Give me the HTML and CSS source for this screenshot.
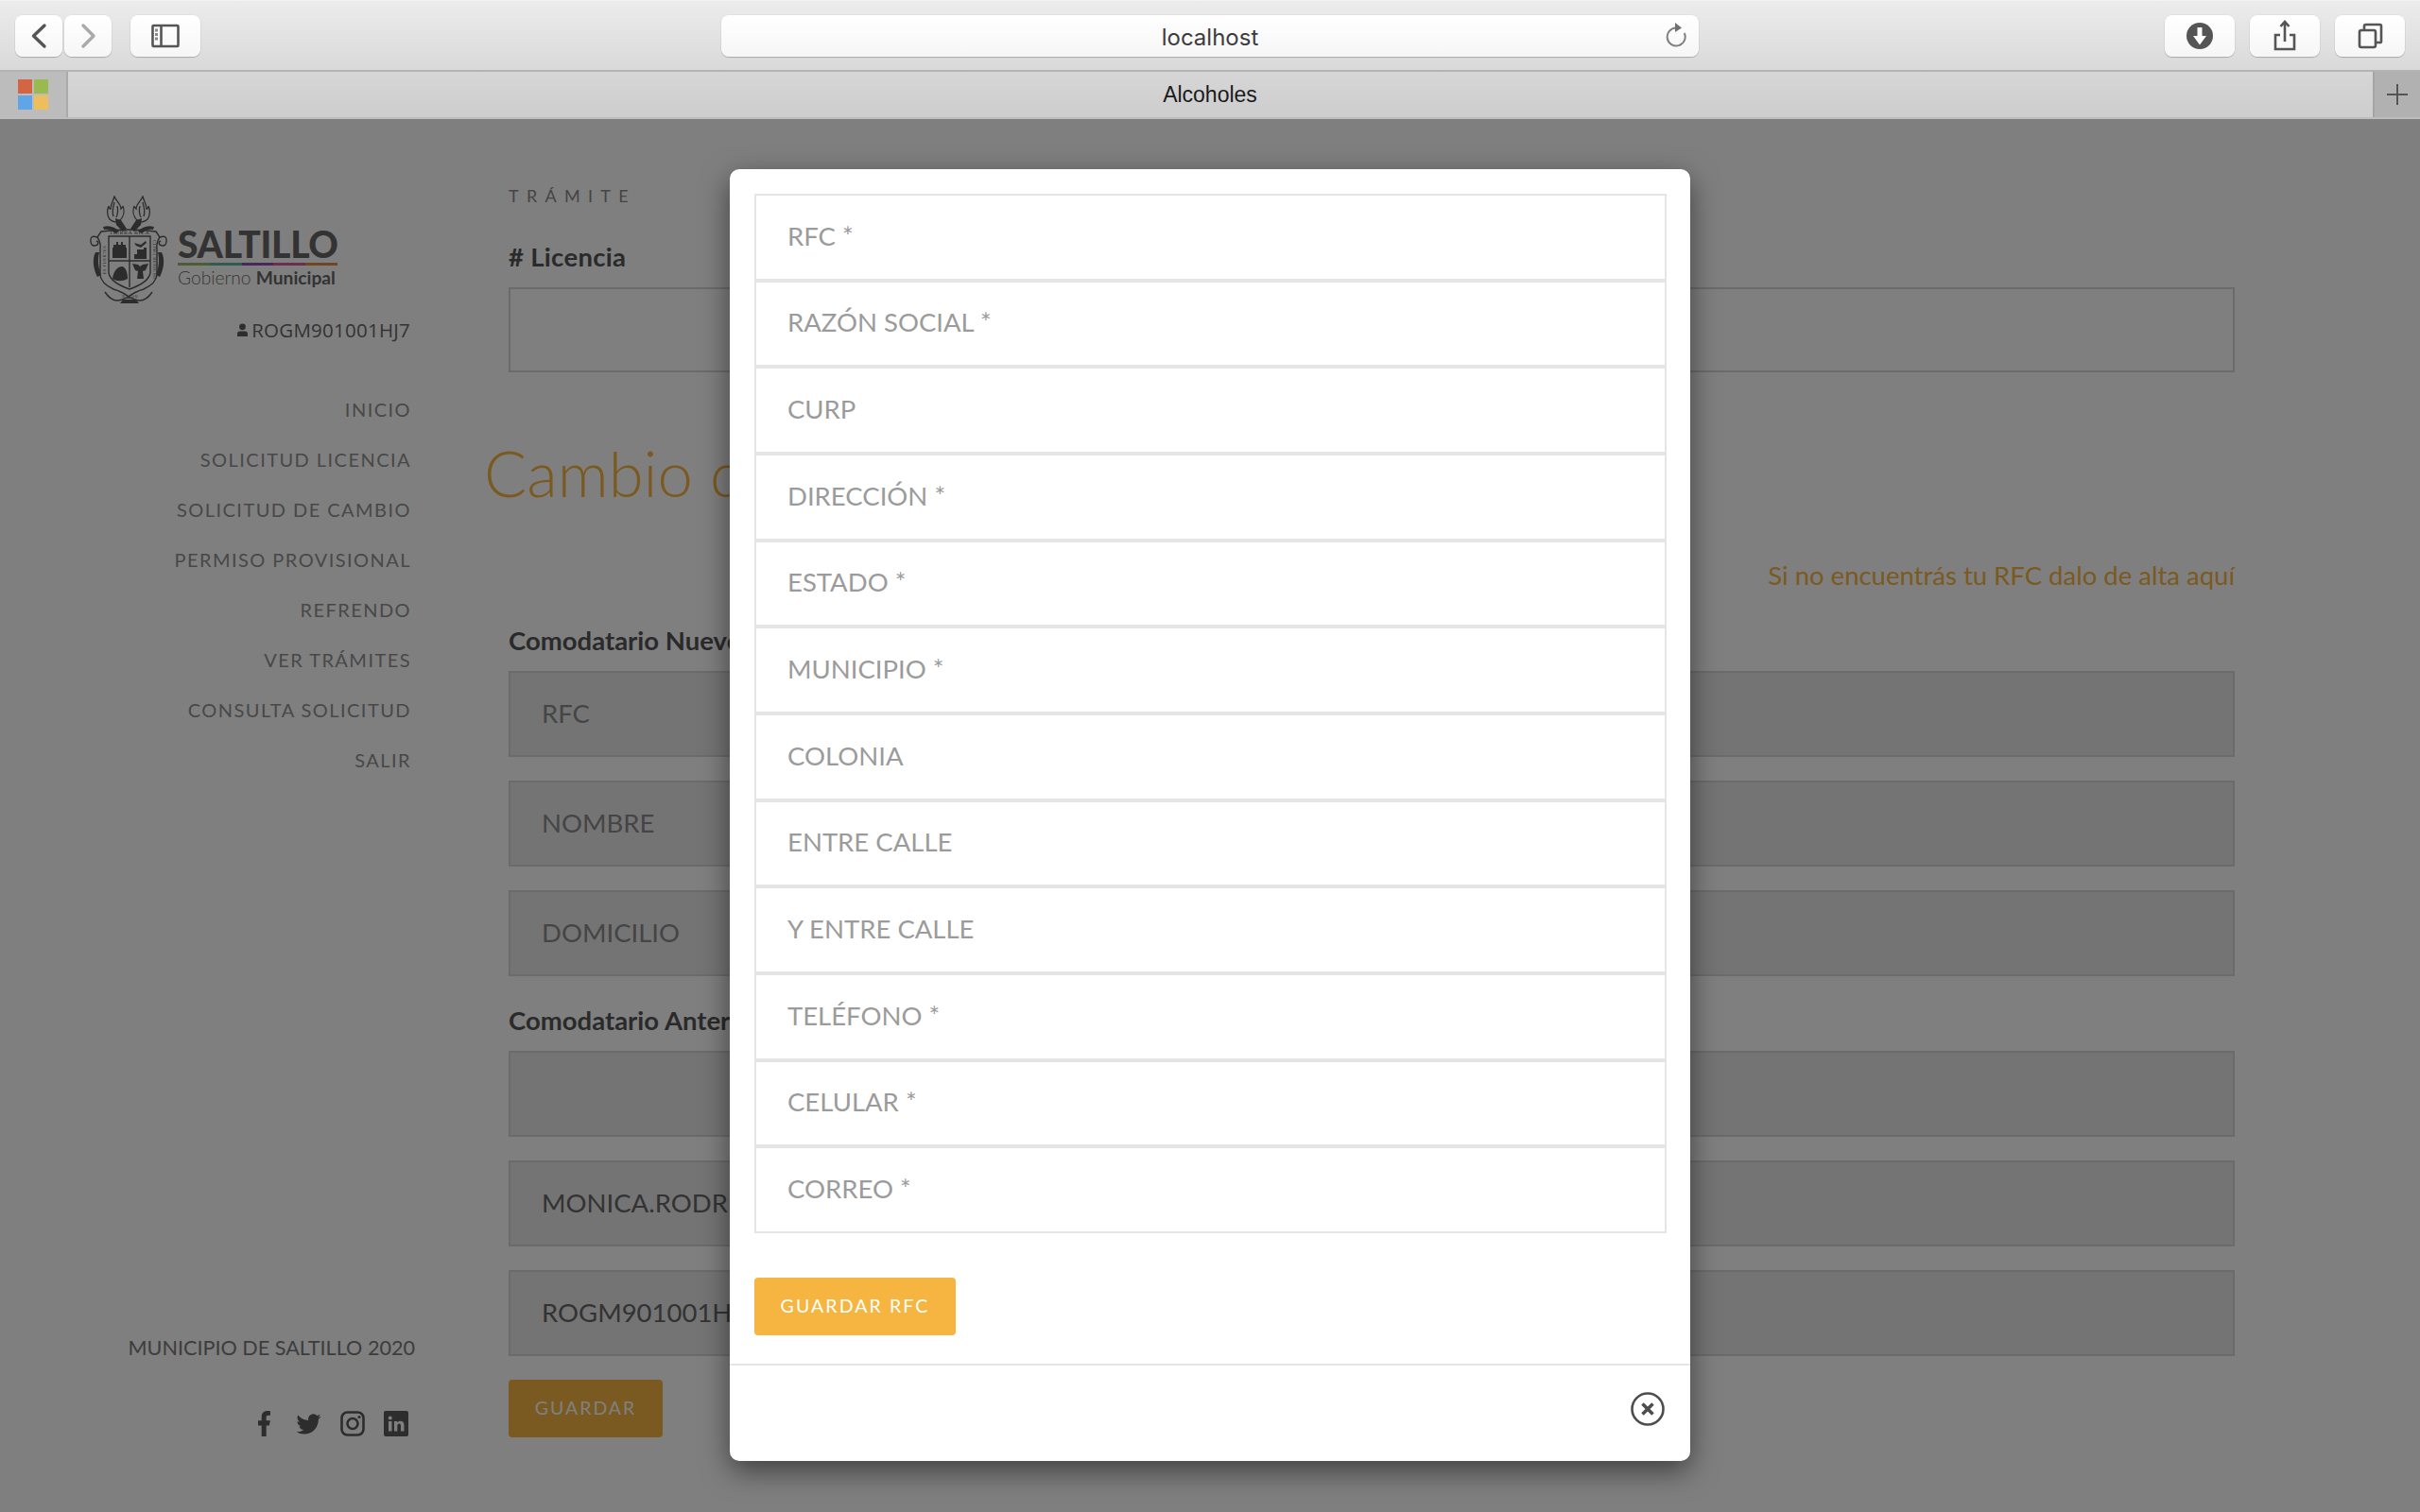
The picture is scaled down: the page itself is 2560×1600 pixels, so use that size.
FILE: index.html
```html
<!DOCTYPE html>
<html lang="es">
<head>
<meta charset="utf-8">
<title>Alcoholes</title>
<link rel="stylesheet" href="styles.css">
</head>
<body>
<div class="browser">
  <header class="toolbar">
    <div class="tb-btn nav-btn"><svg width="50" height="44" viewBox="0 0 50 44"><path d="M31 11 L19.500 22 L31 33" class="ico-s dark-s"/></svg></div>
    <div class="tb-btn nav-btn second"><svg width="50" height="44" viewBox="0 0 50 44"><path d="M20 11 L31 22 L20 33" class="ico-s light-s"/></svg></div>
    <div class="tb-btn wide sidebar-btn"><svg width="74" height="44" viewBox="0 0 74 44"><rect x="23.500" y="11" width="27" height="22" rx="1" class="ico-t"/><path d="M32.500 11V33" class="ico-t"/><path d="M26 16h3M26 20.500h3M26 25h3" class="ico-d"/></svg></div>
    <div class="url">
      <span class="url-text">localhost</span>
      <svg class="reload" width="26" height="28" viewBox="0 0 26 28"><path d="M14 6.500 A9.500 9.500 0 1 0 22.800 12" class="ico-r"/><path d="M13 1 L20 6.500 L13 11 Z" class="ico-f"/></svg>
    </div>
    <div class="tb-btn wide push"><svg width="74" height="44" viewBox="0 0 74 44"><circle cx="37" cy="22" r="14" class="ico-f2"/><path d="M34.500 13h5v9h4.500L37 31.500 30 22h4.500z" class="ico-w"/></svg></div>
    <div class="tb-btn wide gap16"><svg width="74" height="44" viewBox="0 0 74 44"><path d="M32 21 H27 V36 H47 V21 H42" class="ico-t"/><path d="M37 28V7M32.500 12 L37 7 L41.500 12" class="ico-t"/></svg></div>
    <div class="tb-btn wide gap16"><svg width="74" height="44" viewBox="0 0 74 44"><rect x="26" y="16" width="17" height="18" rx="2" class="ico-t"/><path d="M31 16V11.500Q31 10 33 10H47.500Q49 10 49 11.500V28Q49 29 47.500 29H44" class="ico-t"/></svg></div>
  </header>
  <div class="tabbar">
    <div class="fav">
      <svg width="32" height="32" viewBox="0 0 32 32"><rect width="15" height="15" class="w-r"/><rect x="17" width="15" height="15" class="w-g"/><rect y="17" width="15" height="15" class="w-b"/><rect x="17" y="17" width="15" height="15" class="w-y"/></svg>
    </div>
    <div class="tab-title">Alcoholes</div>
    <div class="plus"><svg width="22" height="22" viewBox="0 0 22 22"><path d="M11 0V22M0 11H22" class="ico-p"/></svg></div>
  </div>

  <div class="page">
    <aside class="sidebar">
      <div class="logo">
        <svg class="crest" width="82" height="115" viewBox="0 0 82 115">
          <g class="cr-line thin">
            <path d="M26 1C28 6 33 9 33 14C34 13 35 12 35 11C37 16 36 22 32 26C29 29 24 28 21 25C18 21 18 15 20 11C20 13 21 14 22 14C22 9 25 5 26 1Z"/>
            <path d="M26 7C25 12 23 16 25 22M29 11C30 15 30 19 28 23"/>
            <path d="M56 1C54 6 49 9 49 14C48 13 47 12 47 11C45 16 46 22 50 26C53 29 58 28 61 25C64 21 64 15 62 11C62 13 61 14 60 14C60 9 57 5 56 1Z"/>
            <path d="M56 7C57 12 59 16 57 22M53 11C52 15 52 19 54 23"/>
          </g>
          <g class="cr-fill">
            <path d="M27 24L33 26L39 35L35 38L28 31Z"/>
            <path d="M55 24L49 26L43 35L47 38L54 31Z"/>
            <path d="M14 33C20 31 27 33 31 38L27 40C23 36 19 35 15 36ZM68 33C62 31 55 33 51 38L55 40C59 36 63 35 67 36Z"/>
          </g>
          <g class="cr-line">
            <path d="M12 38Q41 34 70 38L74 44Q70 50 71 56V84Q70 93 57 99Q47 102 41 107Q35 102 25 99Q12 93 11 84V56Q12 50 8 44Z"/>
            <path d="M8 44Q0 41 1 49Q2 55 8 52Q10 49 7 48M74 44Q82 41 81 49Q80 55 74 52Q72 49 75 48"/>
            <path d="M20 43H64V82Q62 92 42 99Q22 92 20 82ZM42 43V97M20 69H64"/>
            <path d="M16 102Q24 114 34 110Q41 106 48 110Q58 114 66 102"/>
          </g>
          <g class="cr-fill">
            <path d="M25 52h3v-3h2v3h3v-3h2v3h3v3h1v11H24V55h1z"/>
            <path d="M47 62h3v-5h7v-2h3v12H47z"/>
            <path d="M47 50l7 2 5-4 1 2-6 5-5-2z"/>
            <path d="M24 88C25 79 30 75 34 75C37 75 40 80 40 88C34 91 29 91 24 88Z"/>
            <path d="M53 75l-2-2-6-1 3 7 3 1-1 8h7l-1-8 3-1 3-7-6 1z"/>
            <path d="M6 60C2 68 4 78 8 86L12 84C9 76 8 68 10 60ZM76 60C80 68 78 78 74 86L70 84C73 76 74 68 72 60Z"/>
            <path d="M35 110h14l3 4H32z"/>
          </g>
          <text x="42" y="41" class="cr-text">TIERRA RICA</text>
          <text class="cr-text small" transform="translate(17 68) rotate(-90)">ES FUERTES</text>
          <text class="cr-text small" transform="translate(67 68) rotate(90)">CLIMA BENIGNO</text>
          <text class="cr-text small" transform="translate(42 105) rotate(180)">NOBLE</text>
        </svg>
        <div class="wordmark">
          <div class="wm-title">SALTILLO</div>
          <div class="wm-rule"><i class="c1"></i><i class="c2"></i><i class="c3"></i><i class="c4"></i><i class="c5"></i></div>
          <div class="wm-sub">Gobierno <b>Municipal</b></div>
        </div>
      </div>
      <div class="user">
        <svg width="11" height="14" viewBox="0 0 11 14"><circle cx="5.500" cy="3.800" r="3.400" class="so"/><path d="M0 14V11.500Q0 8.500 3 8.500H8Q11 8.500 11 11.500V14Z" class="so"/></svg>
        <span>ROGM901001HJ7</span>
      </div>
      <nav class="menu">
        <a>INICIO</a>
        <a>SOLICITUD LICENCIA</a>
        <a>SOLICITUD DE CAMBIO</a>
        <a>PERMISO PROVISIONAL</a>
        <a>REFRENDO</a>
        <a>VER TRÁMITES</a>
        <a>CONSULTA SOLICITUD</a>
        <a>SALIR</a>
      </nav>
      <div class="foot">
        <div class="copy">MUNICIPIO DE SALTILLO 2020</div>
        <div class="social">
          <svg class="s-f" width="13" height="27" viewBox="7 2 10.500 20" preserveAspectRatio="none"><path d="M14 13.500h2.500l1-4H14v-2c0-1.030 0-2 2-2h1.500V2.140c-.326-.043-1.557-.14-2.857-.14C11.928 2 10 3.657 10 6.700v2.800H7v4h3V22h4z" class="so"/></svg>
          <svg width="27" height="26" viewBox="0 0 24 24"><path d="M23.953 4.570a10 10 0 01-2.825.775 4.958 4.958 0 002.163-2.723c-.951.555-2.005.959-3.127 1.184a4.920 4.920 0 00-8.384 4.482C7.690 8.095 4.067 6.130 1.640 3.162a4.822 4.822 0 00-.666 2.475c0 1.710.870 3.213 2.188 4.096a4.904 4.904 0 01-2.228-.616v.060a4.923 4.923 0 003.946 4.827 4.996 4.996 0 01-2.212.085 4.936 4.936 0 004.604 3.417 9.867 9.867 0 01-6.102 2.105c-.390 0-.779-.023-1.170-.067a13.995 13.995 0 007.557 2.209c9.053 0 13.998-7.496 13.998-13.985 0-.210 0-.420-.015-.630A9.935 9.935 0 0024 4.590z" class="so"/></svg>
          <svg width="26" height="27" viewBox="0 0 26 27"><rect x="1.500" y="1.500" width="23" height="24" rx="6" class="st"/><circle cx="13" cy="13.500" r="5.500" class="st"/><circle cx="20" cy="6.500" r="1.600" class="so"/></svg>
          <svg width="26" height="27" viewBox="0 0 26 27"><rect width="26" height="27" rx="2" class="so"/><rect x="5" y="11" width="3.500" height="10.500" class="cut"/><circle cx="6.750" cy="7.500" r="2" class="cut"/><path d="M11 11h3.300v1.500c.8-1.200 2-1.800 3.400-1.800 2.800 0 3.800 1.800 3.800 4.600v6.200H18v-5.600c0-1.500-.4-2.400-1.700-2.400-1.500 0-2 1-2 2.500v5.500H11z" class="cut"/></svg>
        </div>
      </div>
    </aside>
    <main class="main">
      <div class="eyebrow">TRÁMITE</div>
      <div class="label lic-label"># Licencia</div>
      <div class="box plain"></div>
      <h1 class="title">Cambio de Comodatario</h1>
      <div class="alta">Si no encuentrás tu RFC dalo de alta aquí</div>
      <div class="label sec-label">Comodatario Nuevo</div>
      <div class="stack">
        <div class="box ro ph">RFC</div>
        <div class="box ro ph">NOMBRE</div>
        <div class="box ro ph">DOMICILIO</div>
      </div>
      <div class="label sec-label tight">Comodatario Anterior</div>
      <div class="stack">
        <div class="box ro"></div>
        <div class="box ro">MONICA.RODRIGUEZ</div>
        <div class="box ro">ROGM901001HJ7</div>
      </div>
      <div class="save">GUARDAR</div>
    </main>

    <div class="overlay">
      <section class="modal">
        <div class="modal-body">
          <div class="fields">
            <div class="field">RFC *</div>
            <div class="field">RAZÓN SOCIAL *</div>
            <div class="field">CURP</div>
            <div class="field">DIRECCIÓN *</div>
            <div class="field">ESTADO *</div>
            <div class="field">MUNICIPIO *</div>
            <div class="field">COLONIA</div>
            <div class="field">ENTRE CALLE</div>
            <div class="field">Y ENTRE CALLE</div>
            <div class="field">TELÉFONO *</div>
            <div class="field">CELULAR *</div>
            <div class="field">CORREO *</div>
          </div>
          <div class="save-rfc">GUARDAR RFC</div>
        </div>
        <div class="modal-foot">
          <svg width="36" height="36" viewBox="0 0 36 36"><circle cx="18" cy="18" r="16.500" class="x-c"/><path d="M12.500 12.500 L23.500 23.500 M23.500 12.500 L12.500 23.500" class="x-x"/></svg>
        </div>
      </section>
    </div>
  </div>
</div>
</body>
</html>
```
FILE: styles.css
```css
* { box-sizing: border-box; }
html, body { margin: 0; padding: 0; }
body { width: 2560px; height: 1600px; overflow: hidden; background: #fff; font-family: "Lato", "Noto Sans", sans-serif; }
.browser { width: 2560px; height: 1600px; display: flex; flex-direction: column; }

/* browser chrome */
.toolbar { height: 76px; flex: none; display: flex; align-items: flex-start; padding: 15px 16px 0; background: linear-gradient(#ececec, #d9d9d9); border-top: 1px solid #f2f2f2; border-bottom: 2px solid #b3b3b3; }
.tb-btn { height: 44px; flex: none; background: linear-gradient(#ffffff, #f6f6f6); border-radius: 8px; box-shadow: 0 1px 1px rgba(0,0,0,.22), 0 0 0 .5px rgba(0,0,0,.06); }
.tb-btn svg { display: block; }
.nav-btn { width: 50px; }
.second { margin-left: 2px; }
.wide { width: 74px; }
.sidebar-btn { margin-left: 20px; }
.push { margin-left: 493px; }
.gap16 { margin-left: 16px; }
.url { width: 1034px; height: 44px; margin-left: 551px; flex: none; position: relative; display: flex; align-items: center; justify-content: center; padding-top: 2px; background: linear-gradient(#ffffff, #f6f6f6); border-radius: 8px; box-shadow: 0 1px 1px rgba(0,0,0,.22), 0 0 0 .5px rgba(0,0,0,.06); }
.url-text { font-family: "Inter", sans-serif; font-size: 24px; color: #3c3c3c; }
.reload { position: absolute; right: 12px; top: 7px; }
.ico-s { fill: none; stroke-width: 3.4; stroke-linecap: round; stroke-linejoin: round; }
.dark-s { stroke: #555; }
.light-s { stroke: #aaa; }
.ico-t { fill: none; stroke: #555; stroke-width: 2.6; }
.ico-d { fill: none; stroke: #8a8a8a; stroke-width: 3; }
.ico-r { fill: none; stroke: #808080; stroke-width: 2; }
.ico-f { fill: #707070; }
.ico-f2 { fill: #555; }
.ico-w { fill: #fff; }
.ico-p { fill: none; stroke: #555; stroke-width: 2; }

.tabbar { height: 50px; flex: none; display: flex; align-items: stretch; background: linear-gradient(#d6d6d6, #cdcdcd); border-bottom: 2px solid #bdbdbd; }
.fav { width: 72px; flex: none; padding: 8px 0 0 19px; background: #bcbcbc; border-right: 2px solid #aaa; }
.fav svg { display: block; }
.w-r { fill: #d46542; }
.w-g { fill: #98ba4f; }
.w-b { fill: #5fa5e8; }
.w-y { fill: #efbe5c; }
.tab-title { flex: 1; display: flex; align-items: center; justify-content: center; padding-right: 22px; font-family: "Liberation Sans", sans-serif; font-size: 23px; color: #1b1b1b; }
.plus { width: 50px; flex: none; display: flex; align-items: center; justify-content: center; background: #b1b1b1; border-left: 2px solid #a5a5a5; }

/* page under the overlay */
.page { flex: 1; position: relative; display: flex; min-height: 0; }
.sidebar { width: 434px; flex: none; display: flex; flex-direction: column; align-items: flex-end; padding: 81px 0 80px; }
.logo { width: 100%; display: flex; padding-left: 95px; gap: 11px; }
.crest { flex: none; display: block; }
.cr-fill { fill: #585858; }
.cr-line { fill: none; stroke: #585858; stroke-width: 1.400; }
.thin { stroke-width: 1.300; }
.cr-text { font-family: "Liberation Serif", serif; font-size: 6px; text-anchor: middle; fill: #585858; letter-spacing: .5px; }
.small { font-size: 4.500px; }
.wordmark { width: 169px; margin-top: 32px; display: flex; flex-direction: column; }
.wm-title { font-family: "Lato", sans-serif; font-weight: 900; font-size: 39px; line-height: 38px; letter-spacing: -.3px; color: #666; white-space: nowrap; }
.wm-rule { display: flex; height: 3px; margin-top: 1px; }
.wm-rule i { flex: 1; display: block; }
.c1 { background: #9cb868; }
.c2 { background: #5fb8a0; }
.c3 { background: #9050b0; }
.c4 { background: #d85c9c; }
.c5 { background: #e08a48; }
.wm-sub { margin-top: 2px; font-size: 19.200px; line-height: 22px; color: #707070; white-space: nowrap; font-weight: 300; }
.wm-sub b { font-weight: 700; color: #666; }
.user { margin-top: 13px; height: 28px; display: flex; align-items: center; gap: 4px; font-family: "Open Sans", sans-serif; font-size: 20.500px; letter-spacing: .25px; color: #666; }
.so { fill: #5a5a5a; }
.st { fill: none; stroke: #5a5a5a; stroke-width: 2.600; }
.cut { fill: #fff; }
.menu { margin-top: 44px; margin-right: -1px; display: flex; flex-direction: column; align-items: flex-end; }
.menu a { height: 53px; line-height: 53px; font-size: 20px; letter-spacing: 1.450px; color: #919191; white-space: nowrap; }
.foot { margin-top: auto; width: 100%; display: flex; flex-direction: column; align-items: flex-end; }
.copy { margin-right: -5px; line-height: 30px; font-size: 21.600px; color: #7a7a7a; white-space: nowrap; font-weight: 400; }
.social { margin-top: 52px; height: 27px; display: flex; align-items: center; gap: 20px; margin-right: 2px; }
.social svg { display: block; }
.s-f { margin-right: 7px; }

.main { width: 1826px; margin-left: 104px; padding-top: 69px; flex: none; }
.eyebrow { line-height: 24px; font-size: 18px; letter-spacing: 8.300px; color: #8a8a8a; white-space: nowrap; }
.label { font-weight: 700; font-size: 27.500px; line-height: 34px; color: #555; white-space: nowrap; }
.lic-label { margin-top: 36px; letter-spacing: .3px; }
.box { height: 91px; display: flex; align-items: center; padding: 0 0 3px 33px; font-size: 27.500px; color: #666; border: 2px solid #d6d6d6; white-space: nowrap; }
.plain { height: 90px; margin-top: 15px; background: #fff; }
.title { margin: 66px 0 0 -26px; font-weight: 300; font-size: 67px; line-height: 80px; color: #f5b540; white-space: nowrap; }
.alta { margin-top: 51px; text-align: right; line-height: 36px; font-size: 27.500px; color: #f5b540; }
.sec-label { margin-top: 34px; }
.tight { margin-top: 30px; }
.stack { margin-top: 15px; display: flex; flex-direction: column; gap: 25px; }
.ro { background: #e9e9e9; }
.ph { color: #8a8a8a; }
.save { margin-top: 25px; width: 163px; height: 61px; display: flex; align-items: center; justify-content: center; padding-bottom: 3px; border-radius: 4px; background: #f5b540; color: #fff; font-size: 19.500px; letter-spacing: 2px; }

/* modal */
.overlay { position: absolute; inset: 0; background: rgba(0,0,0,.5); padding: 53px 0 0 772px; }
.modal { width: 1016px; height: 1367px; display: flex; flex-direction: column; background: #fff; border-radius: 10px; box-shadow: 0 10px 30px rgba(0,0,0,.5); }
.modal-body { padding: 26px 25px 30px 26px; border-bottom: 2px solid #e5e5e5; }
.fields { display: flex; flex-direction: column; }
.field { height: 91.670px; display: flex; align-items: center; padding: 0 0 3px 33px; border: 2px solid #e5e5e5; font-size: 27.500px; color: #9b9b9b; white-space: nowrap; }
.save-rfc { margin-top: 47px; width: 213px; height: 61px; display: flex; align-items: center; justify-content: center; padding-bottom: 2px; border-radius: 4px; background: #f5b540; color: #fff; font-size: 19.500px; letter-spacing: 2.100px; }
.modal-foot { flex: 1; display: flex; justify-content: flex-end; padding: 28px 27px 0 0; }
.modal-foot svg { display: block; }
.x-c { fill: none; stroke: #4d4d4d; stroke-width: 2.600; }
.x-x { fill: none; stroke: #4d4d4d; stroke-width: 3.600; }
```
